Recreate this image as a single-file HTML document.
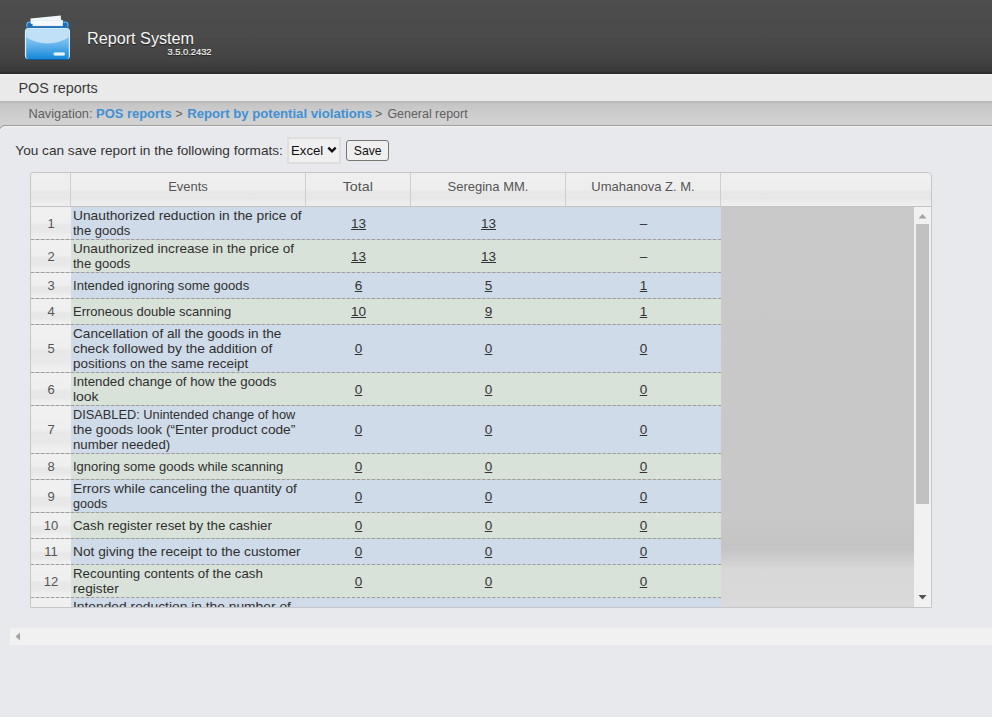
<!DOCTYPE html>
<html><head><meta charset="utf-8">
<style>
*{box-sizing:border-box;margin:0;padding:0}
html,body{width:992px;height:717px;overflow:hidden}
body{background:#e8e9ed;font-family:"Liberation Sans",sans-serif;position:relative;color:#333}
.abs{position:absolute;white-space:nowrap;line-height:normal}
#hdr{left:0;top:0;width:992px;height:74px;background:linear-gradient(#4d4d4d 0%,#4a4a4a 50%,#434343 80%,#393939 96%,#262626 100%)}
#title{left:87px;top:29.4px;font-size:16.2px;color:#f6f6f6;text-shadow:0 1px 1px rgba(0,0,0,.6)}
#ver{left:167.6px;top:47.4px;font-size:9.3px;color:#f0f0f0;font-weight:normal;-webkit-text-stroke:0.2px #f0f0f0;text-shadow:0 1px 1px rgba(0,0,0,.6)}
#tbar{left:0;top:74px;width:992px;height:27px;background:linear-gradient(#f1f1f1,#eaeaea 3px,#eaeaea)}
#ptitle{left:18.5px;top:80.4px;font-size:14.4px;color:#3a3a3a}
#crumb{left:0;top:101px;width:992px;height:25px;background:linear-gradient(#b4b4b4 0,#c5c5c5 3px,#cdcdcd 50%,#d2d2d2 100%);border-bottom:1px solid #9e9e9e}
.cr{font-size:12.2px;color:#606060;top:106.5px}
.lk{font-weight:bold;color:#4190d3}
#panel{left:0;top:126px;width:992px;height:591px;background:#e8e9ed;border-top-left-radius:7px;border-top:1px solid #f4f4f6}
#fmt{left:15.3px;top:143.2px;font-size:13.63px;color:#333}
#sel{left:287px;top:137px;width:54px;height:27px;background:#f0f0f0;border:2px solid #dedede}
#seltxt{left:291px;top:142.6px;font-size:13.2px;color:#111}
#btn{left:346px;top:140px;width:43px;height:21px;background:#efefef;border:1px solid #767676;border-radius:3px}
#btntxt{left:353.8px;top:144.3px;font-size:12.2px;color:#111}
#tbl{left:30px;top:172px;width:902px;height:436px;border:1px solid #c6c6c6;border-top-left-radius:3px;border-top-right-radius:4px;overflow:hidden;background:linear-gradient(#c9c9c9 0,#c8c8c8 343px,#c4c4c4 376px,#d8d8d8 397px,#d9d9d9 100%)}
#th{left:0;top:0;width:900px;height:34px;background:linear-gradient(#efefef 0%,#eeeeee 48%,#e8e8e8 56%,#e7e7e7 76%,#ececec 86%,#efefef 100%);border-bottom:1px solid #c3c3c3}
.hc{position:absolute;top:0;height:33px;border-right:1px solid #cfcfcf;font-size:13px;color:#555;text-align:center;padding-top:5.8px;white-space:nowrap}
#rows{left:0;top:34px;width:691px;height:400px}
.r{position:absolute;left:0;width:690px;border-bottom:1px dashed #9c9c9c}
.r .n{position:absolute;left:0;top:0;bottom:0;width:40px;background:linear-gradient(#f0f0f0 0%,#efefef 48%,#e7e7e7 56%,#e8e8e8 76%,#eeeeee 90%,#f0f0f0 100%);font-size:13px;color:#555;display:flex;align-items:center;justify-content:center;line-height:15px}
.r .d{position:absolute;left:40px;top:0;bottom:0;width:650px}
.b{background:#cfdbe8}
.g{background:#d8e2d8}
.ev{position:absolute;left:42.3px;top:0;bottom:0;display:flex;align-items:center;font-size:13.5px;line-height:15px;color:#2f2f2f;white-space:nowrap}
.ln{display:inline-block;transform-origin:0 50%}
.v{position:absolute;top:0;bottom:0;display:flex;align-items:center;justify-content:center;line-height:15px;font-size:13.5px;color:#333}
.v span{text-decoration:underline}
.v.dash span{text-decoration:none}
#vsb{left:883px;top:34px;width:17px;height:400px;background:#f1f1f1}
#thumb{left:885px;top:51px;width:13px;height:280px;background:#c1c1c1}
#hsb{left:10px;top:628px;width:982px;height:17px;background:#f1f1f1}

</style></head><body>
<div id="hdr" class="abs"></div>
<svg class="abs" style="left:22px;top:12px" width="52" height="52" viewBox="22 12 52 52">
  <defs>
    <linearGradient id="fb" x1="0" y1="0" x2="0" y2="1">
      <stop offset="0" stop-color="#8fcaf2"/><stop offset="0.45" stop-color="#6fbaee"/><stop offset="1" stop-color="#1688d8"/>
    </linearGradient>
    <clipPath id="bc"><rect x="26.2" y="29.3" width="42.6" height="29.6" rx="2.5"/></clipPath>
  </defs>
  <rect x="25.9" y="21.2" width="43" height="7.5" rx="3" fill="#1d6cb6"/>
  <rect x="26.9" y="22.2" width="41" height="6" rx="2.2" fill="none" stroke="#7cc4f2" stroke-width="1"/>
  <polygon points="30.4,18.6 60.8,15.4 61.2,24 31,24" fill="#f1f6fa"/>
  <rect x="32.5" y="19.9" width="30.4" height="6.3" fill="#e4eef5"/>
  <rect x="33.5" y="20.9" width="28.4" height="4.3" fill="#f3f8fb"/>
  <rect x="25.9" y="26.5" width="43" height="2" fill="#2470b4"/>
  <rect x="24.9" y="28.1" width="45.1" height="32" rx="3.5" fill="#0f5c9c"/>
  <rect x="24.9" y="28.1" width="45.1" height="31" rx="3.5" fill="#d6efff"/>
  <rect x="26.2" y="29.3" width="42.6" height="29.6" rx="2.5" fill="url(#fb)"/>
  <g clip-path="url(#bc)"><ellipse cx="47.5" cy="28.5" rx="26" ry="15" fill="#bfe0f7"/></g>
  <rect x="53.3" y="52.2" width="11.9" height="3.5" rx="1.75" fill="#bfe5ff"/>
  <rect x="54.3" y="52.9" width="9.9" height="2.1" rx="1" fill="#e6f6ff"/>
</svg>
<div id="title" class="abs">Report System</div>
<div id="ver" class="abs">3.5.0.2432</div>
<div id="tbar" class="abs"></div>
<div id="ptitle" class="abs">POS reports</div>
<div id="crumb" class="abs"></div>
<div class="abs cr" style="left:28.5px;font-size:12.8px;top:106px">Navigation:</div>
<div class="abs cr lk" style="left:96px;font-size:12.96px;top:106px">POS reports</div>
<div class="abs cr" style="left:175.4px">&gt;</div>
<div class="abs cr lk" style="left:187.2px;font-size:13.16px;top:105.6px">Report by potential violations</div>
<div class="abs cr" style="left:375px">&gt;</div>
<div class="abs cr" style="left:387.4px;font-size:12.45px;top:107px">General report</div>
<div id="panel" class="abs"></div>
<svg class="abs" style="left:0;top:124px" width="8" height="8" viewBox="0 0 8 8"><rect x="0" y="0" width="4" height="2" fill="#d2d2d2"/><path d="M4.5,1.5 Q1.5,1.8 0,4.5" fill="none" stroke="#9a9a9a" stroke-width="1.1"/></svg>
<div id="fmt" class="abs">You can save report in the following formats:</div>
<div id="sel" class="abs"></div>
<div id="seltxt" class="abs">Excel</div>
<svg class="abs" style="left:327px;top:146px" width="10" height="8" viewBox="0 0 10 8"><polyline points="1.3,1.6 5,5.4 8.7,1.6" fill="none" stroke="#111" stroke-width="2.3"/></svg>
<div id="btn" class="abs"></div>
<div id="btntxt" class="abs">Save</div>
<div id="tbl" class="abs">
  <div id="th" class="abs">
    <div class="hc" style="left:0;width:40px"></div>
    <div class="hc" style="left:40px;width:235px">Events</div>
    <div class="hc" style="left:275px;width:105px"><span style="display:inline-block;transform:scaleX(1.1)">Total</span></div>
    <div class="hc" style="left:380px;width:155px">Seregina MM.</div>
    <div class="hc" style="left:535px;width:155px">Umahanova Z. M.</div>
  </div>
  <div id="rows" class="abs">
<div class="r" style="top:0px;height:33px"><div class="n">1</div><div class="d b"></div><div class="ev"><div><span class="ln" style="transform:scaleX(1.0188)">Unauthorized reduction in the price of</span><br><span class="ln" style="transform:scaleX(0.9663)">the goods</span></div></div><div class="v" style="left:275px;width:105px"><span>13</span></div><div class="v" style="left:380px;width:155px"><span>13</span></div><div class="v dash" style="left:535px;width:155px"><span>–</span></div></div>
<div class="r" style="top:33px;height:33px"><div class="n">2</div><div class="d g"></div><div class="ev"><div><span class="ln" style="transform:scaleX(1.0056)">Unauthorized increase in the price of</span><br><span class="ln" style="transform:scaleX(0.9663)">the goods</span></div></div><div class="v" style="left:275px;width:105px"><span>13</span></div><div class="v" style="left:380px;width:155px"><span>13</span></div><div class="v dash" style="left:535px;width:155px"><span>–</span></div></div>
<div class="r" style="top:66px;height:26px"><div class="n">3</div><div class="d b"></div><div class="ev"><div><span class="ln" style="transform:scaleX(0.9701)">Intended ignoring some goods</span></div></div><div class="v" style="left:275px;width:105px"><span>6</span></div><div class="v" style="left:380px;width:155px"><span>5</span></div><div class="v" style="left:535px;width:155px"><span>1</span></div></div>
<div class="r" style="top:92px;height:26px"><div class="n">4</div><div class="d g"></div><div class="ev"><div><span class="ln" style="transform:scaleX(0.9619)">Erroneous double scanning</span></div></div><div class="v" style="left:275px;width:105px"><span>10</span></div><div class="v" style="left:380px;width:155px"><span>9</span></div><div class="v" style="left:535px;width:155px"><span>1</span></div></div>
<div class="r" style="top:118px;height:48px"><div class="n">5</div><div class="d b"></div><div class="ev"><div><span class="ln" style="transform:scaleX(1.0098)">Cancellation of all the goods in the</span><br><span class="ln" style="transform:scaleX(1.0214)">check followed by the addition of</span><br><span class="ln" style="transform:scaleX(0.9977)">positions on the same receipt</span></div></div><div class="v" style="left:275px;width:105px"><span>0</span></div><div class="v" style="left:380px;width:155px"><span>0</span></div><div class="v" style="left:535px;width:155px"><span>0</span></div></div>
<div class="r" style="top:166px;height:33px"><div class="n">6</div><div class="d g"></div><div class="ev"><div><span class="ln" style="transform:scaleX(0.9823)">Intended change of how the goods</span><br><span class="ln" style="transform:scaleX(1.0337)">look</span></div></div><div class="v" style="left:275px;width:105px"><span>0</span></div><div class="v" style="left:380px;width:155px"><span>0</span></div><div class="v" style="left:535px;width:155px"><span>0</span></div></div>
<div class="r" style="top:199px;height:48px"><div class="n">7</div><div class="d b"></div><div class="ev"><div><span class="ln" style="transform:scaleX(0.9464)">DISABLED: Unintended change of how</span><br><span class="ln" style="transform:scaleX(1.0145)">the goods look (“Enter product code”</span><br><span class="ln" style="transform:scaleX(0.9812)">number needed)</span></div></div><div class="v" style="left:275px;width:105px"><span>0</span></div><div class="v" style="left:380px;width:155px"><span>0</span></div><div class="v" style="left:535px;width:155px"><span>0</span></div></div>
<div class="r" style="top:247px;height:26px"><div class="n">8</div><div class="d g"></div><div class="ev"><div><span class="ln" style="transform:scaleX(0.9630)">Ignoring some goods while scanning</span></div></div><div class="v" style="left:275px;width:105px"><span>0</span></div><div class="v" style="left:380px;width:155px"><span>0</span></div><div class="v" style="left:535px;width:155px"><span>0</span></div></div>
<div class="r" style="top:273px;height:33px"><div class="n">9</div><div class="d b"></div><div class="ev"><div><span class="ln" style="transform:scaleX(1.0149)">Errors while canceling the quantity of</span><br><span class="ln" style="transform:scaleX(0.9325)">goods</span></div></div><div class="v" style="left:275px;width:105px"><span>0</span></div><div class="v" style="left:380px;width:155px"><span>0</span></div><div class="v" style="left:535px;width:155px"><span>0</span></div></div>
<div class="r" style="top:306px;height:26px"><div class="n">10</div><div class="d g"></div><div class="ev"><div><span class="ln" style="transform:scaleX(0.9855)">Cash register reset by the cashier</span></div></div><div class="v" style="left:275px;width:105px"><span>0</span></div><div class="v" style="left:380px;width:155px"><span>0</span></div><div class="v" style="left:535px;width:155px"><span>0</span></div></div>
<div class="r" style="top:332px;height:26px"><div class="n">11</div><div class="d b"></div><div class="ev"><div><span class="ln" style="transform:scaleX(1.0178)">Not giving the receipt to the customer</span></div></div><div class="v" style="left:275px;width:105px"><span>0</span></div><div class="v" style="left:380px;width:155px"><span>0</span></div><div class="v" style="left:535px;width:155px"><span>0</span></div></div>
<div class="r" style="top:358px;height:33px"><div class="n">12</div><div class="d g"></div><div class="ev"><div><span class="ln" style="transform:scaleX(0.9841)">Recounting contents of the cash</span><br><span class="ln" style="transform:scaleX(1.0152)">register</span></div></div><div class="v" style="left:275px;width:105px"><span>0</span></div><div class="v" style="left:380px;width:155px"><span>0</span></div><div class="v" style="left:535px;width:155px"><span>0</span></div></div>
<div class="r" style="top:391px;height:33px"><div class="n">13</div><div class="d b"></div><div class="ev"><div><span class="ln" style="transform:scaleX(1.0223)">Intended reduction in the number of</span><br><span class="ln" style="transform:scaleX(0.9325)">goods</span></div></div><div class="v" style="left:275px;width:105px"><span>0</span></div><div class="v" style="left:380px;width:155px"><span>0</span></div><div class="v" style="left:535px;width:155px"><span>0</span></div></div>
  </div>
  <div id="vsb" class="abs"></div>
  <div id="thumb" class="abs"></div>
  <svg class="abs" style="left:883px;top:34px" width="17" height="400" viewBox="0 0 17 400">
    <polygon points="4.5,11.5 12.5,11.5 8.5,7" fill="#a3a3a3"/>
    <polygon points="4.5,388 12.5,388 8.5,392.5" fill="#505050"/>
  </svg>
</div>
<div id="hsb" class="abs"></div>
<svg class="abs" style="left:10px;top:628px" width="17" height="17" viewBox="0 0 17 17"><polygon points="10,4.5 10,12.5 5.5,8.5" fill="#a3a3a3"/></svg>

</body></html>
